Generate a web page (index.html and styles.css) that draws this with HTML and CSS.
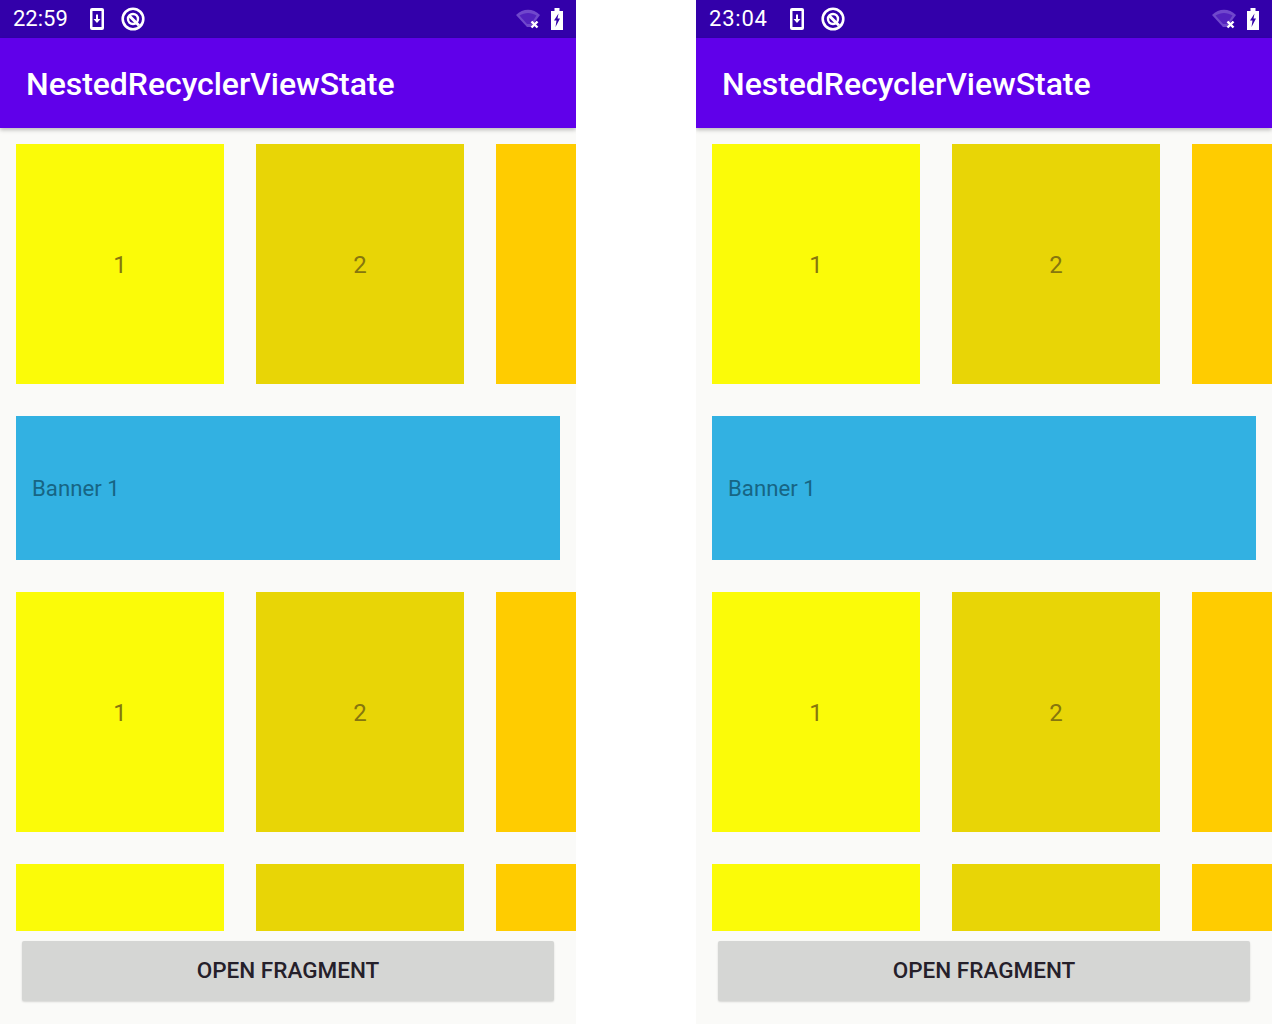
FILE: index.html
```html
<!DOCTYPE html>
<html lang="en">
<head>
<meta charset="utf-8">
<title>NestedRecyclerViewState</title>
<link rel="stylesheet" href="styles.css">
</head>
<body>
<div class="phone">
  <div class="status">
    <span class="time">22:59</span>
    <svg class="ic-dl" width="14" height="22" viewBox="0 0 14 22"><rect width="14" height="22" rx="2" fill="#fff"/><rect x="2.500" y="3" width="9" height="16" fill="#3300aa"/><path d="M6 6.500h2v4.500h2.500L7 15l-3.500-4H6z" fill="#fff"/></svg>
    <svg class="ic-dnd" width="24" height="24" viewBox="0 0 24 24"><circle cx="12" cy="12" r="10.300" fill="none" stroke="#fff" stroke-width="2.600"/><circle cx="12" cy="12" r="5" fill="none" stroke="#fff" stroke-width="2.400"/><path d="M8 8.500l10 10" stroke="#fff" stroke-width="3"/></svg>
    <span class="spacer"></span>
    <svg class="ic-wifi" width="25" height="20" viewBox="0 0 25 20"><path d="M0 6C7-1 17-1 24 6L15 18h-4z" fill="#7048cc"/><path d="M3.500 6.500C9 3 15 3 20.500 6.500L15 15h-4z" fill="#5322bf"/><path d="M15.500 12.500l6 6m0-6l-6 6" stroke="#fff" stroke-width="2.400"/></svg>
    <svg class="ic-bat" width="12" height="22" viewBox="0 0 12 22"><path d="M3.500 0h5v3H12v19H0V3h3.500z" fill="#fff"/><path d="M7.500 5.500L3 12.500h2.500L4.500 19 9 10.500H6.500z" fill="#3300aa"/></svg>
  </div>
  <header class="appbar">NestedRecyclerViewState</header>
  <main class="list">
    <section class="row">
      <div class="card c1">1</div><div class="card c2">2</div><div class="card c3"></div>
    </section>
    <section class="banner">Banner 1</section>
    <section class="row">
      <div class="card c1">1</div><div class="card c2">2</div><div class="card c3"></div>
    </section>
    <section class="row">
      <div class="card c1"></div><div class="card c2"></div><div class="card c3"></div>
    </section>
  </main>
  <div class="foot"><button class="btn">OPEN FRAGMENT</button></div>
</div>
<div class="phone">
  <div class="status">
    <span class="time time-wide">23:04</span>
    <svg class="ic-dl" width="14" height="22" viewBox="0 0 14 22"><rect width="14" height="22" rx="2" fill="#fff"/><rect x="2.500" y="3" width="9" height="16" fill="#3300aa"/><path d="M6 6.500h2v4.500h2.500L7 15l-3.500-4H6z" fill="#fff"/></svg>
    <svg class="ic-dnd" width="24" height="24" viewBox="0 0 24 24"><circle cx="12" cy="12" r="10.300" fill="none" stroke="#fff" stroke-width="2.600"/><circle cx="12" cy="12" r="5" fill="none" stroke="#fff" stroke-width="2.400"/><path d="M8 8.500l10 10" stroke="#fff" stroke-width="3"/></svg>
    <span class="spacer"></span>
    <svg class="ic-wifi" width="25" height="20" viewBox="0 0 25 20"><path d="M0 6C7-1 17-1 24 6L15 18h-4z" fill="#7048cc"/><path d="M3.500 6.500C9 3 15 3 20.500 6.500L15 15h-4z" fill="#5322bf"/><path d="M15.500 12.500l6 6m0-6l-6 6" stroke="#fff" stroke-width="2.400"/></svg>
    <svg class="ic-bat" width="12" height="22" viewBox="0 0 12 22"><path d="M3.500 0h5v3H12v19H0V3h3.500z" fill="#fff"/><path d="M7.500 5.500L3 12.500h2.500L4.500 19 9 10.500H6.500z" fill="#3300aa"/></svg>
  </div>
  <header class="appbar">NestedRecyclerViewState</header>
  <main class="list">
    <section class="row">
      <div class="card c1">1</div><div class="card c2">2</div><div class="card c3"></div>
    </section>
    <section class="banner">Banner 1</section>
    <section class="row">
      <div class="card c1">1</div><div class="card c2">2</div><div class="card c3"></div>
    </section>
    <section class="row">
      <div class="card c1"></div><div class="card c2"></div><div class="card c3"></div>
    </section>
  </main>
  <div class="foot"><button class="btn">OPEN FRAGMENT</button></div>
</div>
</body>
</html>
```
FILE: styles.css
```css
* { box-sizing: border-box; }
html, body { margin: 0; height: 1024px; overflow: hidden; background: #fff; }
body {
  display: flex;
  gap: 120px;
  font-family: Roboto, "Liberation Sans", sans-serif;
}
.phone {
  width: 576px;
  height: 1024px;
  flex: none;
  background: #fafaf8;
  display: flex;
  flex-direction: column;
  overflow: hidden;
}
.status {
  height: 38px;
  flex: none;
  background: #3300aa;
  display: flex;
  align-items: center;
  padding: 0 13px;
  color: #fff;
}
.time { font-size: 22px; width: 54px; line-height: 38px; white-space: nowrap; }
.time-wide { width: 58px; letter-spacing: 0.8px; }
.ic-dl { margin-left: 23px; }
.ic-dnd { margin-left: 17px; }
.spacer { flex: 1; }
.ic-bat { margin-left: 10px; }
.appbar {
  height: 90px;
  flex: none;
  background: #6000ea;
  color: #fff;
  font-size: 32px;
  font-weight: 500;
  letter-spacing: -0.05px;
  line-height: 92px;
  padding-left: 26px;
  box-shadow: 0 2px 4px rgba(0,0,0,.25);
  position: relative;
  z-index: 1;
}
.list {
  height: 803px;
  flex: none;
  overflow: hidden;
  padding: 16px 0 0 16px;
}
.row { display: flex; gap: 32px; margin-bottom: 32px; }
.card {
  width: 208px;
  height: 240px;
  flex: none;
  display: flex;
  align-items: center;
  justify-content: center;
  padding-top: 2px;
  font-size: 24px;
  color: #86760e;
}
.c1 { background: #fbfb08; }
.c2 { background: #e8d506; }
.c3 { background: #ffcc00; }
.banner {
  width: 544px;
  height: 144px;
  margin-bottom: 32px;
  background: #32b1e2;
  color: #176584;
  font-size: 22.200px;
  display: flex;
  align-items: center;
  padding: 0 0 0 16px;
}
.foot { padding: 10px 22px 0; }
.btn {
  display: block;
  width: 532px;
  height: 60px;
  border: 0;
  border-radius: 2px;
  padding: 0 0 2px;
  background: #d5d6d4;
  color: #25202a;
  font: 500 22.500px Roboto, "Liberation Sans", sans-serif;
  box-shadow: 0 1px 2px rgba(0,0,0,.15);
}
```
